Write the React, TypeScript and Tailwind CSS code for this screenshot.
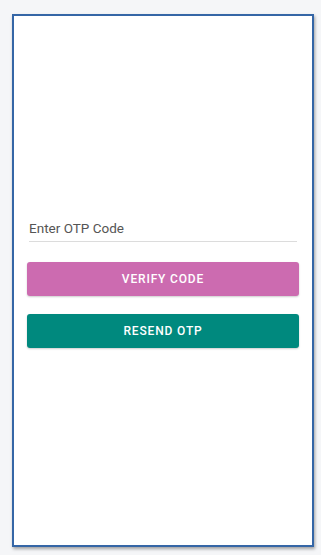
import React from "react";

export default function App() {
  return (
    <div className="w-[321px] h-[555px] bg-[#f5f6f8] pt-[14px] pl-[12px]" style={{ fontFamily: "Roboto, 'Liberation Sans', sans-serif" }}>
      <div className="w-[302px] h-[533px] bg-white border-2 border-[#3566a6] shadow-[1px_2px_3px_rgba(0,0,0,0.35)] flex flex-col justify-center px-[13px] pb-[2px]">
        <div className="mx-[2px] border-b border-[#dcdcdc] pt-[5px] pb-[1px]">
          <input
            className="w-full text-[13.5px] text-[#555] placeholder:text-[#555] outline-none bg-transparent leading-[14px]"
            placeholder="Enter OTP Code"
          />
        </div>
        <button className="mt-[20px] h-[34px] w-full rounded-[3px] bg-[#cc6bb0] text-white text-[12px] font-medium tracking-[0.07em] shadow-[0_1px_2px_rgba(0,0,0,0.2)]">
          VERIFY CODE
        </button>
        <button className="mt-[18px] h-[34px] w-full rounded-[3px] bg-[#00897e] text-white text-[12px] font-medium tracking-[0.07em] shadow-[0_1px_2px_rgba(0,0,0,0.2)]">
          RESEND OTP
        </button>
      </div>
    </div>
  );
}
